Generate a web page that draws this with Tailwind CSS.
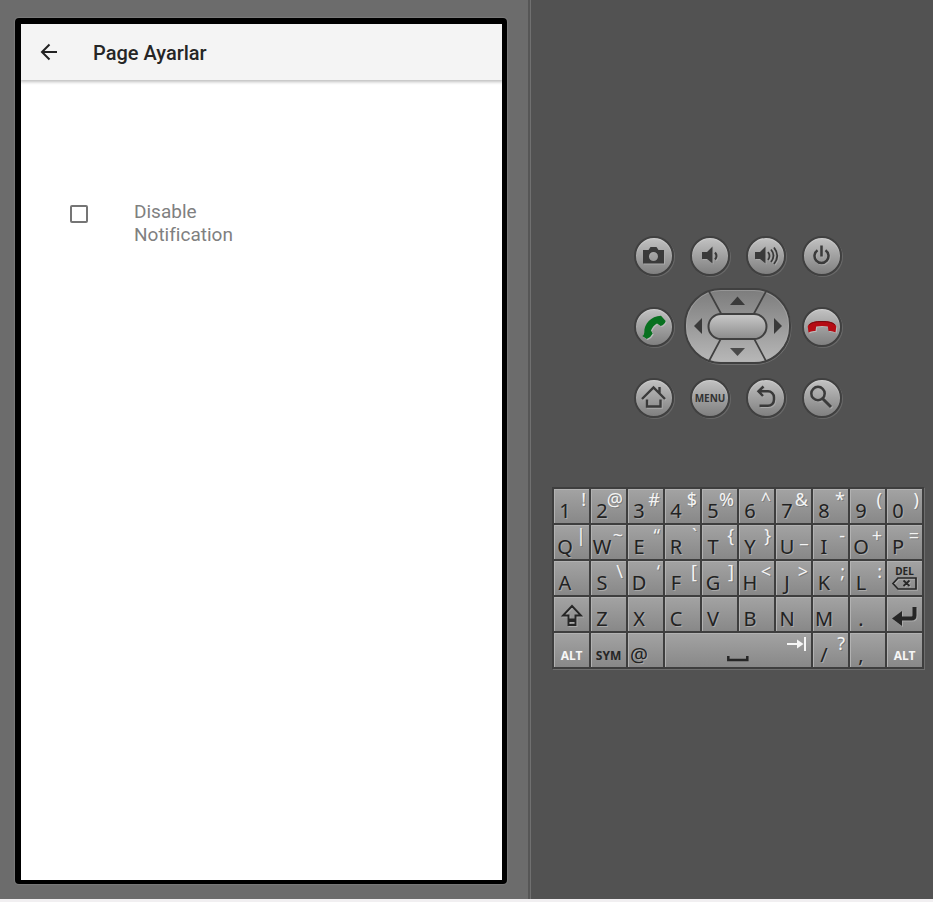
<!DOCTYPE html>
<html lang="tr">
<head>
<meta charset="utf-8">
<meta name="viewport" content="width=device-width, initial-scale=1">
<title>Page Ayarlar</title>
<script src="https://cdn.jsdelivr.net/npm/@tailwindcss/browser@4"></script>
</head>
<body class="flex min-h-screen flex-col border-b-3 border-[#f1eff1] bg-[#525252]">
<div class="flex flex-1">
  <main class="flex flex-1 border-r-2 border-[#565656] bg-[#6c6c6c] pt-[18px] pr-[21px] pb-[15px] pl-[15px]">
    <section class="flex flex-1 flex-col rounded-[4px] border-t-6 border-r-5 border-b-4 border-l-6 border-black bg-white font-['Roboto',sans-serif] shadow-[0_0_1px_1px_#7c7c7c]">
      <header class="relative flex h-14 items-center gap-8 bg-[#f4f4f4] pl-4 shadow-[0_1px_3px_1px_rgba(0,0,0,0.25)]">
        <button type="button" aria-label="Back">
          <svg class="size-6" viewBox="0 0 24 24" fill="none" stroke="#222" stroke-width="2"><path d="M20 12H5.500M12.500 4.500L5 12l7.500 7.500"/></svg>
        </button>
        <h1 class="pt-0.5 text-xl font-medium text-[#262626]">Page Ayarlar</h1>
      </header>
      <div class="flex items-start gap-[46px] pt-[120px] pl-[49px]">
        <input id="disable" type="checkbox" class="mt-[5px] size-[18px] appearance-none rounded-[2px] border-2 border-[#757575] bg-white checked:bg-[#757575]">
        <label for="disable" class="w-28 text-[19px] leading-[23px] text-[#808080]">Disable Notification</label>
      </div>
    </section>
  </main>
  <aside class="flex w-[403px] flex-col items-center border-l border-[#707070] bg-[#525252] pt-[236px] pr-[9px] pl-[21px]">
    <div class="flex w-52 flex-col gap-3">
      <div class="flex justify-between" id="rowA"></div>
      <div class="flex items-center justify-between" id="rowB"></div>
      <div class="flex justify-between" id="rowC"></div>
    </div>
    <div id="keyboard" class="mt-[69px] grid w-full grid-cols-10 gap-[2px] border-2 border-[#3e3e3e] bg-[#3e3e3e] font-['Noto_Sans',sans-serif] shadow-[1px_1px_0_#6e6e6e]"></div>
  </aside>
</div>
<script>
const round = (label, body) => `<button type="button" aria-label="${label}" class="flex size-10 items-center justify-center rounded-full border-2 border-[#404040] bg-linear-to-b from-[#c2c2c2] to-[#808080] shadow-[1px_1px_0_#686868,inset_0_1px_1px_#d0d0d0]">${body}</button>`;
const icon = d => `<svg class="size-9 shrink-0 drop-shadow-[1px_1px_0_#aaaaaa]" viewBox="0 0 36 36" fill="none" stroke="#3a3a3a" stroke-width="2.500">${d}</svg>`;
const put = (id, html) => { document.getElementById(id).innerHTML = html; };

put('rowA',
  round('Camera', icon('<path fill="#3a3a3a" stroke="none" fill-rule="evenodd" d="M7 12h5.500l2-3h6l2 3H28v13.500H7zM17.500 14a4.500 4.500 0 1 0 0 9 4.500 4.500 0 0 0 0-9z"/>')) +
  round('Volume down', icon('<path fill="#3a3a3a" stroke="none" d="M10 14h5l5.500-5.500v17L15 21h-5z"/><path d="M23 14.500q3 3.500 0 7" stroke-width="2"/>')) +
  round('Volume up', icon('<path fill="#3a3a3a" stroke="none" d="M7 14h5l5.500-5.500v17L12 21H7z"/><path d="M20 14q3 4 0 8M23 11.500q5 6 0 12.500M26 9.500q6.500 8.500 0 16.500" stroke-width="1.800"/>')) +
  round('Power', icon('<path d="M13.500 12.200a7 7 0 1 0 8 0M17.500 7.500v11"/>')));

put('rowB',
  round('Call', `<svg class="size-9 shrink-0 drop-shadow-[1px_1px_0_#bbbbbb]" viewBox="0 0 36 36"><path fill="#08701f" d="M25 6.800l4.700 5.200q-1 3.500-5 5L21 14.500q-4 2-6 7l1.700 3q-2 4-6 5.500L6.300 27q2-1 2-3.500C8 15 15 7 25 6.800z"/></svg>`) +
  `<div class="relative h-[78px] w-[108px]">
    <svg class="h-full w-full" viewBox="0 0 108 78">
      <defs>
        <linearGradient id="shell" x1="0" y1="0" x2="0" y2="1"><stop offset="0" stop-color="#7c7c7c"/><stop offset="1" stop-color="#b8b8b8"/></linearGradient>
        <linearGradient id="pill" x1="0" y1="0" x2="0" y2="1"><stop offset="0" stop-color="#cacaca"/><stop offset="1" stop-color="#8b8b8b"/></linearGradient>
      </defs>
      <rect x="2" y="2.500" width="105" height="74" rx="36" fill="none" stroke="#707070"/>
      <rect x="1" y="1" width="105" height="74" rx="36" fill="url(#shell)" stroke="#404040" stroke-width="2"/>
      <rect x="2.500" y="2.500" width="102" height="71" rx="34.500" fill="none" stroke="#b0b0b0" stroke-opacity=".5"/>
      <path d="M24.500 2.500L37 25.500M82.500 2.500L70 25.500M37 50.500L24.500 74M70 50.500L82.500 74" stroke="#404040" stroke-width="1.700"/>
      <rect x="24.500" y="26" width="58" height="25" rx="12.500" fill="url(#pill)" stroke="#404040" stroke-width="2"/>
      <path fill="#3a3a3a" d="M46 17l7.500-8.500L61 17zM10 38l8-8v16zM98 38l-8-8v16z"/><path fill="#4a4a4a" d="M46 60l7.500 8 7.500-8z"/>
    </svg>
    <div class="absolute inset-0 grid grid-cols-[24px_1fr_24px] grid-rows-3">
      <button type="button" aria-label="Left" class="row-span-3"></button>
      <button type="button" aria-label="Up"></button>
      <button type="button" aria-label="Right" class="row-span-3"></button>
      <button type="button" aria-label="Select"></button>
      <button type="button" aria-label="Down"></button>
    </div>
  </div>` +
  round('End call', `<svg class="size-9 shrink-0 drop-shadow-[1px_1px_0_#bbbbbb]" viewBox="0 0 36 36"><path fill="#b50d15" d="M3.700 17.500C5 13.500 10 12 18 12s13 1.500 14.300 5.500L31.500 23.500q-3-2-7-1.500l-.700-4.500q-5.800-1-11.600 0L11.500 22q-4-.5-7 1.500z"/><path fill="none" stroke="#760b10" d="M5 16q3-3.500 13-3.500T31 16"/></svg>`));

put('rowC',
  round('Home', icon('<path d="M6 19L17.500 7.500 29 19M11 19.500v7h13.500v-7M23.500 13V7" stroke-width="2.400"/>')) +
  round('Menu', `<span class="font-['Noto_Sans',sans-serif] text-[10px] font-bold text-[#333]">MENU</span>`) +
  round('Return', icon('<path d="M10 11.300h10a6 6 0 0 1 6 6v2.500a6 6 0 0 1-6 6h-8.500M15.500 6.500l-5 4.800 4.500 4.700"/>')) +
  round('Search', icon('<circle cx="14" cy="13.500" r="6.700"/><path d="M18.500 18.500l8.500 8.500" stroke-width="3"/>')));

const key = (label, body, wide) => `<button type="button" aria-label="${label}" class="${wide ? 'col-span-4' : ''} grid h-[34px] grid-cols-1 grid-rows-1 items-start bg-linear-to-b from-[#a3a3a3] to-[#888888] shadow-[inset_1px_1px_0_#b2b2b2]">${body}</button>`;
const main = t => `<span class="col-start-1 row-start-1 mt-[10px] flex w-[22px] justify-center text-xl leading-6 text-[#222] [text-shadow:1px_1px_0_#aaaaaa]">${t}</span>`;
const alt = t => `<span class="col-start-1 row-start-1 justify-self-end pr-[3px] text-lg leading-5 text-[#f4f4f4] [text-shadow:1px_1px_0_#7c7c7c]">${t}</span>`;
const word = (t, dark) => `<span class="${dark ? 'text-[#262626]' : 'text-[#f6f6f6]'} pt-[13px] text-center text-xs leading-5 font-bold">${t}</span>`;
const glyph = d => `<svg class="h-[34px] w-[35px] drop-shadow-[1px_1px_0_#aaaaaa]" viewBox="0 0 35 34" fill="none" stroke="#262626" stroke-width="2">${d}</svg>`;
const pairs = s => s.split(' ').map(p => key(p[0], main(p[0]) + (p[1] ? alt(p[1] === '<' ? '&lt;' : p.slice(1)) : ''))).join('');

put('keyboard',
  pairs('1! 2@ 3# 4$ 5% 6^ 7& 8* 9( 0)') +
  pairs('Q| W~ E“ R` T{ Y} U_ I- O+ P=') +
  pairs('A S\\ D‘ F[ G] H< J> K; L:') +
  key('Delete', `<span class="col-start-1 row-start-1 pt-[2px] text-center text-[10px] leading-4 font-bold text-[#262626]">DEL</span><span class="col-start-1 row-start-1">${glyph('<path d="M6 22.500l5-5.500h18v11H11zM16.500 19.500l6 5.500M22.500 19.500l-6 5.500" stroke-width="1.700"/>')}</span>`) +
  key('Shift', glyph('<path d="M18 9l-9 9.500h5.500v4h7v-4H27zM14.500 24h7v4h-7z" stroke-width="1.900"/>')) +
  pairs('Z X C V B N M .') +
  key('Enter', glyph('<path d="M27.500 10v8.500q0 3-3 3H12" stroke-width="4"/><path fill="#262626" stroke="none" d="M5 21.500l10-7.500v15z"/>')) +
  key('Left Alt', word('ALT')) + key('Symbols', word('SYM', true)) + key('@', main('@')) +
  key('Space', `<svg class="col-start-1 row-start-1 mt-[19px] h-3 w-6 justify-self-center" viewBox="0 0 24 12" fill="none" stroke="#262626" stroke-width="2.500"><path d="M2.300 4v4h19V4"/></svg><svg class="col-start-1 row-start-1 mt-[3px] mr-[5px] h-4 w-5 justify-self-end" viewBox="0 0 20 16" fill="none" stroke="#f6f6f6" stroke-width="2"><path d="M1 8h12M19 1v14"/><path fill="#f6f6f6" stroke="none" d="M11 3.500L17.500 8 11 12.500z"/></svg>`, true) +
  pairs('/? ,') + key('Right Alt', word('ALT')));
</script>
</body>
</html>
